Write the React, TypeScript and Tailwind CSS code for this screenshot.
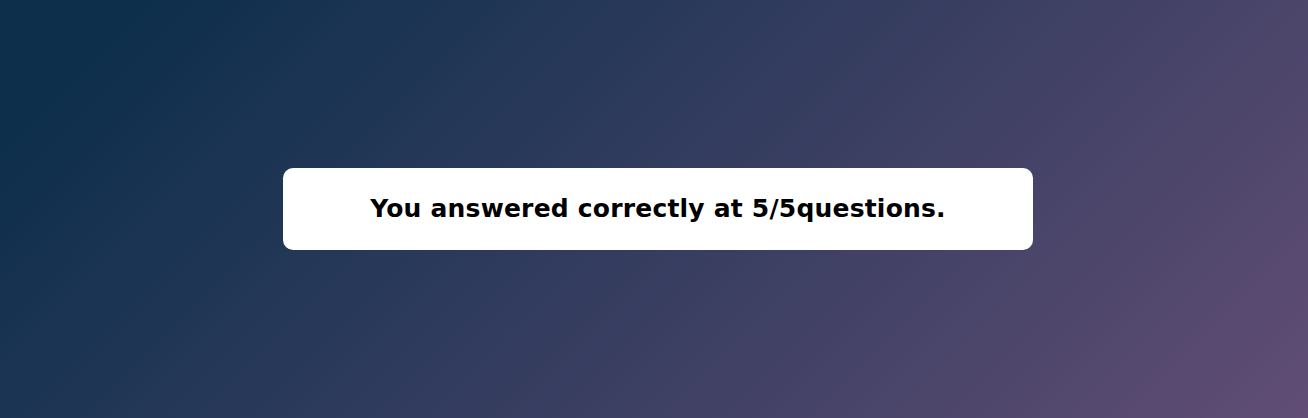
export default function App() {
  return (
    <div className="flex h-[418px] w-full items-center justify-center bg-[linear-gradient(135deg,#0e2f4c_9%,#614d75_100%)] pl-2">
      <div className="flex h-[82px] w-[750px] items-center justify-center rounded-[10px] bg-white">
        <p className="font-['DejaVu_Sans',sans-serif] text-[25px] font-bold tracking-[0.2px] text-black">
          You answered correctly at 5/5questions.
        </p>
      </div>
    </div>
  );
}
